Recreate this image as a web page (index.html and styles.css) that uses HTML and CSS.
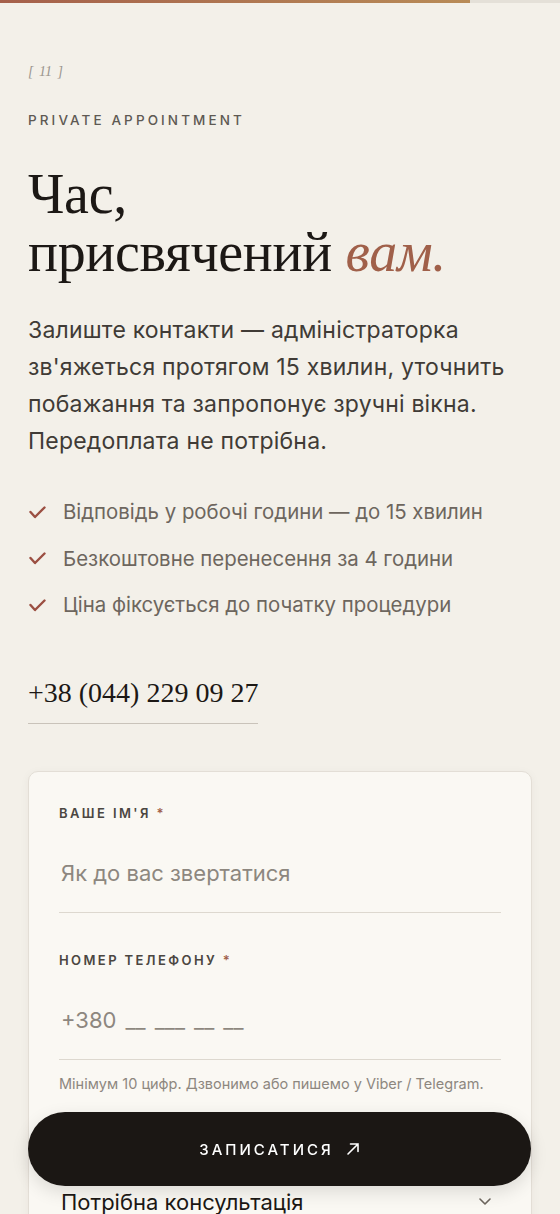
FILE: index.html
```html
<!DOCTYPE html>
<html lang="uk">
<head>
    <meta charset="UTF-8">
    <meta name="viewport" content="width=device-width, initial-scale=1.0">
    <title>Private appointment</title>
    <link rel="stylesheet" href="styles.css">
</head>
<body>
    <!-- scroll progress -->
    <div class="progress"><div class="progress-fill"></div></div>

    <section class="booking">
        <div class="index">[ 11 ]</div>
        <div class="eyebrow">PRIVATE APPOINTMENT</div>

        <h1 class="title">Час,<br>присвячений <em>вам.</em></h1>

        <p class="lead">
            Залиште контакти — адміністраторка зв'яжеться протягом 15 хвилин, уточнить побажання та запропонує зручні вікна. Передоплата не потрібна.
        </p>

        <ul class="perks">
            <li>
                <svg class="check" viewBox="0 0 17 13" width="17" height="13"><polyline points="1.5,6 6,11 15.5,1.5"/></svg>
                Відповідь у робочі години — до 15 хвилин
            </li>
            <li>
                <svg class="check" viewBox="0 0 17 13" width="17" height="13"><polyline points="1.5,6 6,11 15.5,1.5"/></svg>
                Безкоштовне перенесення за 4 години
            </li>
            <li>
                <svg class="check" viewBox="0 0 17 13" width="17" height="13"><polyline points="1.5,6 6,11 15.5,1.5"/></svg>
                Ціна фіксується до початку процедури
            </li>
        </ul>

        <a class="phone" href="tel:+380442290927">+38 (044) 229 09 27</a>

        <form class="card" id="booking-form">
            <div class="field">
                <label for="name">Ваше ім'я <span class="req">*</span></label>
                <input type="text" id="name" name="name" placeholder="Як до вас звертатися">
            </div>
            <div class="field">
                <label for="tel">Номер телефону <span class="req">*</span></label>
                <input type="tel" id="tel" name="tel" class="tel" placeholder="+380 __ ___ __ __">
                <div class="hint">Мінімум 10 цифр. Дзвонимо або пишемо у Viber / Telegram.</div>
            </div>
            <div class="field">
                <label for="service">Процедура</label>
                <div class="select-row">
                    <select id="service" name="service">
                        <option>Потрібна консультація</option>
                        <option>Масаж обличчя</option>
                        <option>Догляд за шкірою</option>
                    </select>
                    <svg class="chevron" viewBox="0 0 12 7" width="12" height="7"><polyline points="1,1 6,6 11,1"/></svg>
                </div>
            </div>
        </form>
    </section>

    <button class="submit" type="submit" form="booking-form">
        Записатися
        <svg viewBox="0 0 14 14" width="14" height="14"><path d="M2 12 L12 2 M4.5 2 H12 V9.5"/></svg>
    </button>
</body>
</html>
```

FILE: styles.css
```css
body {
    margin: 0;
    background: #f3f0e9;
    font-family: Inter, "Noto Sans", sans-serif;
    color: #3b3631;
}
.progress {
    height: 3px;
    background: #e4e0d8;
}
.progress-fill {
    width: 84%;
    height: 100%;
    background: linear-gradient(to right, #a5604b, #b88b57);
}
.booking {
    padding: 59px 28px 160px;
}
.index {
    font-family: "Liberation Serif", serif;
    font-style: italic;
    font-size: 14px;
    line-height: 20px;
    color: #9a958e;
    word-spacing: 2px;
}
.eyebrow {
    margin-top: 29px;
    font-size: 13.5px;
    line-height: 18px;
    font-weight: 500;
    letter-spacing: 3.1px;
    color: #5e5953;
}
.title {
    margin: 36px 0 0;
    font-family: "Liberation Serif", serif;
    font-weight: normal;
    font-size: 56px;
    line-height: 58px;
    letter-spacing: -0.3px;
    color: #1c1815;
}
.title em {
    color: #a0604a;
}
.lead {
    margin: 31px 0 0;
    font-size: 23px;
    line-height: 37px;
    letter-spacing: 0.2px;
    color: #403b36;
}
.perks {
    list-style: none;
    margin: 38px 0 0;
    padding: 0;
}
.perks li {
    display: flex;
    align-items: center;
    gap: 17px;
    font-size: 20.4px;
    line-height: 28px;
    color: #6d665e;
    margin-bottom: 18.5px;
}
.check {
    flex: none;
    margin-left: 1px;
    fill: none;
    stroke: #9b4f42;
    stroke-width: 2.4;
    stroke-linecap: round;
    stroke-linejoin: round;
}
.phone {
    display: inline-block;
    margin-top: 35px;
    padding-bottom: 10px;
    border-bottom: 1px solid #c9c3ba;
    font-family: "Liberation Serif", serif;
    font-size: 28px;
    line-height: 40px;
    color: #1c1815;
    text-decoration: none;
}
.card {
    margin-top: 47px;
    background: #faf8f3;
    border: 1px solid #e3ded6;
    border-radius: 10px;
    box-shadow: 0 2px 10px rgba(60, 40, 20, 0.05);
    padding: 32px 30px 40px;
}
.field {
    margin-bottom: 38px;
}
.field label {
    display: block;
    margin-bottom: 16px;
    font-size: 13px;
    line-height: 18px;
    font-weight: 600;
    letter-spacing: 2.4px;
    text-transform: uppercase;
    color: #4b4641;
}
.req {
    color: #a0604a;
}
.field input {
    display: block;
    width: 100%;
    box-sizing: border-box;
    padding: 21px 2px 25px;
    border: none;
    border-bottom: 1px solid #ddd8cf;
    background: transparent;
    font-family: inherit;
    font-size: 22px;
    line-height: 28px;
    color: #1c1815;
    outline: none;
}
.field input::placeholder {
    color: #8d877f;
}
.field .tel::placeholder {
    word-spacing: 3px;
}
.hint {
    margin-top: 13px;
    font-size: 14.5px;
    line-height: 22px;
    color: #8d877f;
}
.select-row {
    display: flex;
    align-items: center;
    padding: 21px 10px 25px 2px;
    border-bottom: 1px solid #ddd8cf;
}
.select-row select {
    flex: 1;
    appearance: none;
    border: none;
    background: transparent;
    padding: 0;
    font-family: inherit;
    font-size: 22px;
    line-height: 28px;
    color: #1c1815;
    outline: none;
}
.chevron {
    flex: none;
    fill: none;
    stroke: #6d665e;
    stroke-width: 1.6;
    stroke-linecap: round;
    stroke-linejoin: round;
}
.submit {
    position: fixed;
    left: 28px;
    right: 29px;
    bottom: 28px;
    height: 74px;
    display: flex;
    align-items: center;
    justify-content: center;
    gap: 12px;
    border: none;
    border-radius: 999px;
    background: #1b1714;
    color: #fff;
    font-family: inherit;
    font-size: 15px;
    font-weight: 500;
    letter-spacing: 3px;
    text-transform: uppercase;
    box-shadow: 0 6px 18px rgba(0, 0, 0, 0.12);
    cursor: pointer;
}
.submit svg {
    fill: none;
    stroke: #fff;
    stroke-width: 1.6;
    stroke-linecap: round;
}
```
